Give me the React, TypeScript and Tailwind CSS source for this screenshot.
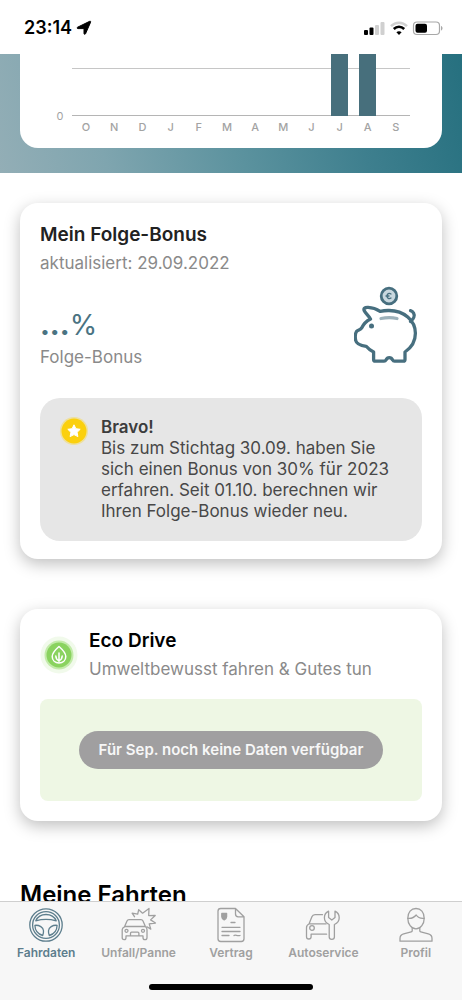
import type { ReactNode } from 'react';

const months = ['O', 'N', 'D', 'J', 'F', 'M', 'A', 'M', 'J', 'J', 'A', 'S'];
const activeMonths = [9, 10];

// ─── Icons ─────────────────────────────────────────
function SteeringWheelIcon() {
  return (
    <svg className="h-9 w-9" viewBox="0 0 36 36" fill="none" stroke="currentColor" strokeWidth="1.3" strokeLinejoin="round">
      <circle cx="18" cy="18" r="16.2" />
      <circle cx="18" cy="18" r="13.4" />
      <path d="M7.800 13.800C9.600 9.800 13.300 7.500 18 7.500s8.400 2.300 10.200 6.300c-6.400-1.700-14-1.700-20.400 0z" />
      <path d="M6.900 18.300c4.600-.400 8.300 2.100 8.600 5.400.100 1.800-.200 3.300-.800 4.800-4.600-1.300-7.700-5.200-7.800-10.200z" />
      <path d="M29.100 18.300c-4.600-.400-8.300 2.100-8.600 5.400-.100 1.800.200 3.300.800 4.800 4.600-1.300 7.700-5.200 7.800-10.200z" />
    </svg>
  );
}

function CrashIcon() {
  return (
    <svg className="h-9 w-9" viewBox="0 0 36 36" fill="none" stroke="currentColor" strokeWidth="1.3" strokeLinejoin="round" strokeLinecap="round">
      <path d="M3.500 19.800L6 14c.4-.9 1-1.300 2-1.300h12c1 0 1.600.4 2 1.300l2.500 5.800c1 .7 1.500 1.700 1.500 3v7.700c0 1.400-.8 2.200-2 2.200s-2-.8-2-2.200v-1.600H5v1.600c0 1.400-.6 2.200-1.900 2.200S1.200 31.900 1.200 30.500v-7.700c0-1.300.8-2.300 2.300-3zM4 19.500h20M9.500 28.500v-2.300c0-.7.400-1.100 1.100-1.100h6.200c.7 0 1.100.4 1.100 1.100v2.300" />
      <circle cx="5.500" cy="23.800" r="1.500" />
      <circle cx="22" cy="23.800" r="1.500" />
      <path d="M13.500 9.700l-2.400-3.500 5.600 1 1-4.500 3.900 3.500L28 1.500l-.3 7.100 6.500-.1-4.600 4.400 4.900 3.100-6.300.9 1.600 5.200-3.900-2.300" />
    </svg>
  );
}

function ContractIcon() {
  return (
    <svg className="h-9 w-9" viewBox="0 0 36 36" fill="none" stroke="currentColor" strokeWidth="1.300" strokeLinejoin="round" strokeLinecap="round">
      <path d="M22.500 1.500H7.700C6 1.500 5 2.500 5 4.200v27.600c0 1.700 1 2.700 2.700 2.700h20.600c1.700 0 2.700-1 2.700-2.700V9.800zM22.500 1.500v5.600c0 1.700 1 2.700 2.700 2.700H31" />
      <path d="M8.800 6.400h4.800v3.300c0 1.500-.8 2.300-2.400 3.100-1.600-.8-2.400-1.600-2.400-3.100z" fill="currentColor" />
      <path d="M18 15.500h4M9 20.300h18M9 24.500h18M9 28.500h7M21 28.500c1.500-1.500 3 1 6 0" />
    </svg>
  );
}

function ServiceIcon() {
  return (
    <svg className="h-9 w-9" viewBox="0 0 36 36" fill="none" stroke="currentColor" strokeWidth="1.300" strokeLinejoin="round" strokeLinecap="round">
      <path d="M17.500 7.700H10c-1.700 0-2.500.6-3.100 2.100L4 17c-1.700.7-2.500 1.900-2.500 3.700v9c0 1.500.8 2.300 2.300 2.300s2.300-.8 2.300-2.300v-2.500h15.500M4.200 16.900h16.800" />
      <circle cx="7" cy="21" r="2.300" />
      <path d="M24.200 30V17.500c-3.200-1.400-4.800-3.600-4.800-6.800 0-2.900 1.500-5.200 4.200-6.500v6.300l3.200 2.500 3.200-2.500V4.200c2.700 1.300 4.200 3.600 4.200 6.500 0 3.200-1.600 5.400-4.800 6.800V30c0 1.500-.9 2.400-2.600 2.400s-2.600-.9-2.600-2.400z" />
    </svg>
  );
}

function ProfileIcon() {
  return (
    <svg className="h-9 w-9" viewBox="0 0 36 36" fill="none" stroke="currentColor" strokeWidth="1.300" strokeLinejoin="round" strokeLinecap="round">
      <path d="M9.800 11.200C9.800 5.400 13.100 1.500 18 1.500s8.200 3.900 8.200 9.700-3.500 10.600-8.200 10.600-8.200-4.800-8.200-10.600z" />
      <path d="M9.900 11.300c4 .4 6.300-.8 8.300-3.300 1.500 2.400 4.500 3.600 7.900 3.300" />
      <path d="M14.200 20.700v3c0 .7-.3 1-1 1.200l-7.500 2c-2.500.7-3.700 2.200-3.700 4.500v2.800h32v-2.800c0-2.300-1.200-3.800-3.700-4.500l-7.500-2c-.7-.2-1-.5-1-1.200v-3" />
    </svg>
  );
}

function PiggyBankIcon() {
  return (
    <svg className="h-20 w-16" viewBox="0 0 64 80" fill="none" stroke="#476f7f" strokeWidth="3.300" strokeLinecap="round" strokeLinejoin="round">
      <circle cx="35" cy="11" r="7.800" strokeWidth="2.800" fill="#c9d8df" />
      <path d="M37 9c-2-1.400-4-.2-4 2s2 3.400 4 2M32 11h3" strokeWidth="1.300" />
      <path d="M16.500 34c-1.800-3-4.300-5-6-7.800-1.500-2.600.2-4 3.600-3.800 4.400.2 8.400 1.600 12 4 2.700-.6 5.900-1 9-.9 14.600.2 26.300 9.500 26.300 22.800 0 8.200-4.200 14.500-10.400 18.700v7.500c0 1-.6 1.700-1.700 1.700h-8.800c-.8 0-1.400-.3-1.700-1-1.700-3.400-5.300-3.400-7 0-.3.700-.9 1-1.700 1h-8.800c-1 0-1.700-.7-1.700-1.700V67c-3.200-1.500-5.600-3.500-7.400-5.700-5.600-.7-9.700-2-10.500-5.800-.7-3.500-.7-6.600.8-9 1-1.500 4-1.700 5-3.300 1.800-3.800 4-6.700 9-9.200z" />
      <path d="M56.500 36.500c3.300-2.500 4.500-6 3-8.600-.7-1.400-1.800-2-3-2.300" />
      <path d="M27 33.500c5-1 11.500-1 16 0" stroke="#9db2bb" />
      <circle cx="17.500" cy="41" r="2.500" fill="#476f7f" stroke="none" />
    </svg>
  );
}

function StatusIcons() {
  return (
    <svg className="h-4 w-20" viewBox="0 0 80 16">
      <rect x="0" y="10" width="4" height="5" rx="1" />
      <rect x="5.500" y="7.500" width="4" height="7.500" rx="1" />
      <rect x="11" y="5" width="4" height="10" rx="1" fill="#d0d0d0" />
      <rect x="16.500" y="2" width="4" height="13" rx="1" fill="#d0d0d0" />
      <path d="M27 6.200c4.600-4.600 11.400-4.600 16 0" fill="none" stroke="#d0d0d0" strokeWidth="2.500" />
      <path d="M29.800 9c3-3 7.400-3 10.400 0" fill="none" stroke="#000" strokeWidth="2.500" />
      <path d="M35 15l-2.600-2.800c1.500-1.300 3.700-1.300 5.200 0z" />
      <rect x="49.500" y="2" width="26" height="12.500" rx="3.500" fill="none" stroke="#a8a8a8" strokeWidth="1.200" />
      <rect x="51.500" y="3.800" width="11.500" height="9" rx="2" />
      <path d="M77 6c2 .7 2 3.800 0 4.500z" fill="#a8a8a8" />
    </svg>
  );
}

// ─── Shared pieces ─────────────────────────────────
function Card({ children }: { children: ReactNode }) {
  return <section className="mx-5 rounded-[18px] bg-white px-5 shadow-[0_5px_16px_rgba(0,0,0,0.25)]">{children}</section>;
}

interface TabProps {
  label: string;
  icon: ReactNode;
  active?: boolean;
}

function Tab({ label, icon, active }: TabProps) {
  return (
    <a
      href="#"
      aria-current={active ? 'page' : undefined}
      className={`flex min-w-0 flex-1 flex-col items-center whitespace-nowrap pt-[5px] text-[12px] leading-5 font-semibold ${active ? 'text-[#5d7e8d]' : 'text-[#a0a0a0]'}`}
    >
      {icon}
      {label}
    </a>
  );
}

function BonusChart() {
  return (
    <div className="mx-5 rounded-b-[18px] bg-white pr-8 pb-3 pl-9 text-[#a3a3a3]">
      <div className="flex items-end gap-2">
        <span className="w-2 translate-y-2 text-center text-[11px] leading-4">0</span>
        <div className="relative flex-1">
          <div className="h-[15px] border-b border-[#c6c6c6]" />
          <div className="h-[47px] border-b border-[#b5b5b5]" />
          <div className="absolute inset-0 grid grid-cols-12">
            {months.map((_, i) => (
              <div key={i} className={activeMonths.includes(i) ? 'mx-auto w-[17px] bg-[#476f7c]' : ''} />
            ))}
          </div>
        </div>
      </div>
      <div className="ml-4 grid grid-cols-12 pt-[3px] text-center text-[11px] leading-[17px] font-medium">
        {months.map((month, i) => (
          <span key={i}>{month}</span>
        ))}
      </div>
    </div>
  );
}

export default function App() {
  return (
    <div className="flex h-screen flex-col overflow-hidden bg-white font-[Inter,sans-serif] text-black">
      <header className="flex h-[54px] shrink-0 items-center justify-between pt-[2px] pr-[18px] pl-6">
        <div className="flex items-center gap-1 text-[18px] leading-6 font-semibold">
          23:14
          <svg className="h-4 w-4" viewBox="0 0 16 16">
            <path d="M13.700 1.300c.7-.3 1.200.2.900.9L9.500 13.800c-.4.8-1.500.6-1.500-.3V8.600H2C1 8.600.8 7.600 1.600 7.200z" stroke="#000" strokeLinejoin="round" />
          </svg>
        </div>
        <StatusIcons />
      </header>

      <main className="min-h-0 flex-1 overflow-y-auto [scrollbar-width:none]">
        <div className="bg-[linear-gradient(75deg,#93aeb6_0%,#7fa5af_22%,#5b929e_50%,#3e7f8e_75%,#26707f_100%)] pb-[25px]">
          <BonusChart />
        </div>

        <div className="flex flex-col gap-[50px] pt-[30px]">
          <Card>
            <div className="pt-[18px] pb-[18px]">
              <h2 className="text-[19px] leading-7 font-semibold text-[#222]">Mein Folge-Bonus</h2>
              <p className="text-[17px] leading-7 text-[#8a8a8a]">aktualisiert: 29.09.2022</p>
              <div className="flex items-start justify-between pt-2 pr-1">
                <div className="pt-[22px]">
                  <p className="text-[28px] leading-9 text-[#4a7382]">
                    <span className="font-extrabold">...</span>%
                  </p>
                  <p className="text-[17px] leading-7 text-[#8a8a8a]">Folge-Bonus</p>
                </div>
                <PiggyBankIcon />
              </div>
              <div className="mt-[27px] flex gap-[13px] rounded-[20px] bg-[#e6e6e6] py-[19px] pr-8 pl-5">
                <svg className="h-7 w-7 shrink-0" viewBox="0 0 28 28">
                  <circle cx="14" cy="14" r="14" fill="#fbd318" opacity=".35" />
                  <circle cx="14" cy="14" r="12.500" fill="#fbd00e" />
                  <path d="M14 7.800l1.900 3.900 4.300.6-3.100 3 .8 4.300-3.900-2-3.900 2 .8-4.300-3.100-3 4.300-.6z" fill="#fff" stroke="#fff" strokeLinejoin="round" />
                </svg>
                <div className="text-[17px] leading-[21px] text-[#484848]">
                  <h3 className="font-semibold text-[#3c3c3c]">Bravo!</h3>
                  <p>Bis zum Stichtag 30.09. haben Sie sich einen Bonus von 30% für 2023 erfahren. Seit 01.10. berechnen wir Ihren Folge-Bonus wieder neu.</p>
                </div>
              </div>
            </div>
          </Card>

          <Card>
            <div className="pt-[18px] pb-5">
              <div className="flex items-center gap-[11px]">
                <svg className="h-[38px] w-[38px] shrink-0" viewBox="0 0 38 38" fill="none" stroke="#fff" strokeWidth="1.500" strokeLinecap="round" strokeLinejoin="round">
                  <circle cx="19" cy="19" r="18.500" fill="#f1faeb" stroke="none" />
                  <circle cx="19" cy="19" r="14.500" fill="#c3ebaa" stroke="none" />
                  <circle cx="19" cy="19" r="12.500" fill="#8ad35f" stroke="none" />
                  <path d="M19 10.500c-4 3.500-6.800 6.300-6.800 10.100 0 4 3 6.400 6.800 6.400s6.800-2.400 6.800-6.400c0-3.800-2.800-6.600-6.800-10.100z" />
                  <path d="M19 17v9M15.800 20c.2 2.500 1.200 4 3.200 4.700 2-.7 3-2.200 3.200-4.700" />
                </svg>
                <div>
                  <h2 className="text-[19px] leading-7 font-semibold">Eco Drive</h2>
                  <p className="text-[17px] leading-7 text-[#8a8a8a]">Umweltbewusst fahren &amp; Gutes tun</p>
                </div>
              </div>
              <div className="mt-4 flex justify-center rounded-lg bg-[#eef7e4] py-8">
                <p className="rounded-full bg-[#a09fa0] px-5 py-2 text-[15px] leading-[22px] font-semibold text-[#f7f7f7]">
                  Für Sep. noch keine Daten verfügbar
                </p>
              </div>
            </div>
          </Card>

          <h2 className="px-5 pt-2 text-[24px] leading-8 font-semibold">Meine Fahrten</h2>
        </div>
      </main>

      <footer className="shrink-0 border-t border-[#cfcfcf] bg-[#f7f7f7] pb-[10px]">
        <nav className="flex">
          <Tab label="Fahrdaten" icon={<SteeringWheelIcon />} active />
          <Tab label="Unfall/Panne" icon={<CrashIcon />} />
          <Tab label="Vertrag" icon={<ContractIcon />} />
          <Tab label="Autoservice" icon={<ServiceIcon />} />
          <Tab label="Profil" icon={<ProfileIcon />} />
        </nav>
        <div className="mx-auto mt-[21px] h-[6px] w-[164px] rounded-full bg-black" />
      </footer>
    </div>
  );
}
